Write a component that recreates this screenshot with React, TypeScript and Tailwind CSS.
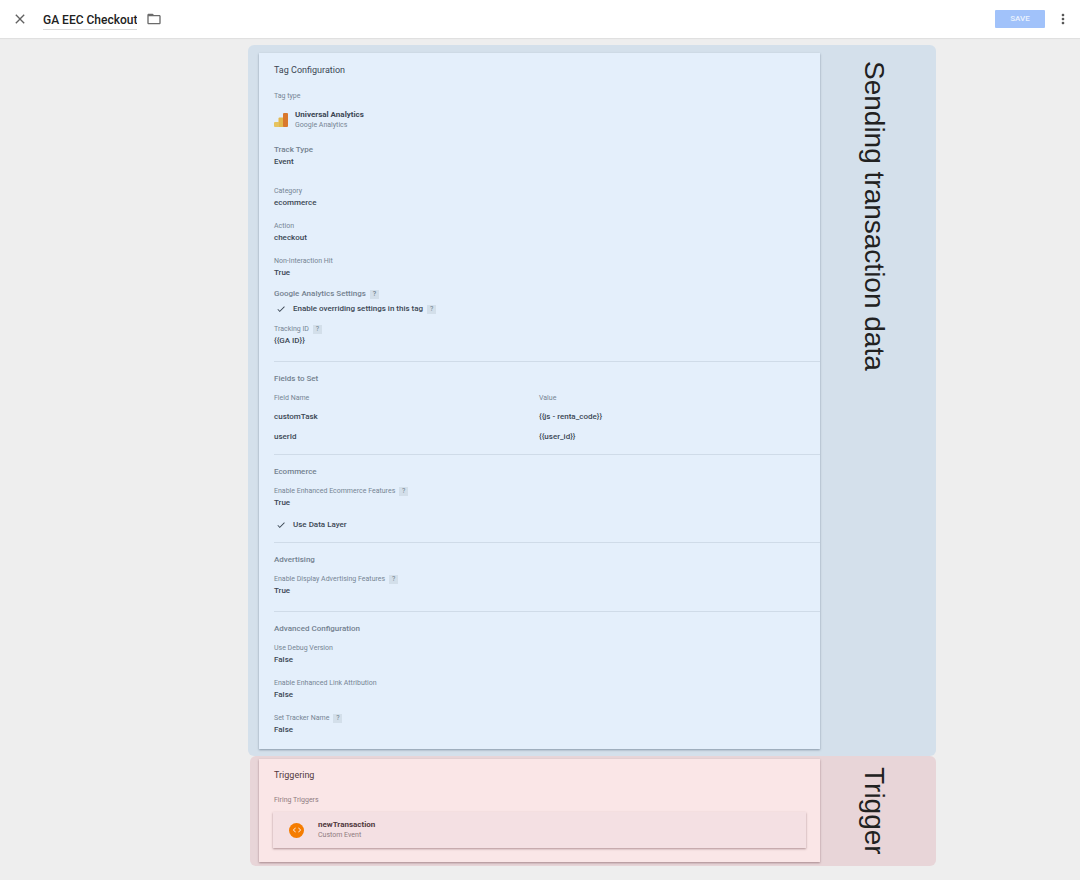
import React from 'react';
import { MdCheck, MdClose, MdCode, MdFolderOpen, MdMoreVert } from 'react-icons/md';

interface FieldProps {
  label: string;
  value: string;
  help?: boolean;
  strong?: boolean;
}

const HelpButton: React.FC<{ topic: string }> = ({ topic }) => (
  <button
    type="button"
    aria-label={`Help: ${topic}`}
    className="flex size-[9px] items-center justify-center bg-[#d3dfea] text-[7px] leading-none text-[#6f7f8e]"
  >
    ?
  </button>
);

const Field: React.FC<FieldProps> = ({ label, value, help, strong }) => (
  <dl>
    <dt
      className={
        strong
          ? 'flex items-center gap-1 text-[8px] leading-3 font-medium text-[#73818f]'
          : 'flex items-center gap-1 text-[7px] leading-3 text-[#768594]'
      }
    >
      {label}
      {help && <HelpButton topic={label} />}
    </dt>
    <dd className="text-[8px] leading-3 font-medium text-[#3b4754]">{value}</dd>
  </dl>
);

const CheckField: React.FC<{ id: string; label: string; help?: boolean }> = ({ id, label, help }) => (
  <div className="flex h-3 items-center gap-1">
    <label htmlFor={id} className="flex items-center text-[8px] leading-3 font-medium text-[#3b4754]">
      <span className="relative mr-[5px] flex size-[14px] items-center justify-center">
        <input id={id} type="checkbox" defaultChecked className="peer absolute inset-0 appearance-none" />
        <MdCheck className="invisible size-[10px] peer-checked:visible" />
      </span>
      {label}
    </label>
    {help && <HelpButton topic={label} />}
  </div>
);

const Section: React.FC<{ title: string; className?: string; children: React.ReactNode }> = ({
  title,
  className = '',
  children,
}) => (
  <section className={`ml-[15px] border-t border-[#cfdbe8] pt-[11px] ${className}`}>
    <h3 className="mb-[7px] text-[8px] leading-3 font-medium text-[#73818f]">{title}</h3>
    {children}
  </section>
);

const AnalyticsLogo: React.FC = () => (
  <svg viewBox="0 0 14 14" className="size-[14px] shrink-0" aria-hidden="true">
    <path d="M5.500 4.500H10V14H4.500V5.500a1 1 0 0 1 1-1z" fill="#e3b84c" />
    <path d="M1 9h4v5H1a1 1 0 0 1-1-1v-3a1 1 0 0 1 1-1z" fill="#e6c35f" />
    <rect x="9" y="0" width="5" height="14" rx="1" fill="#d9782d" />
  </svg>
);

const TopBar: React.FC = () => (
  <header className="flex h-[38px] items-center bg-white pr-[9px] pl-3 shadow-[0_1px_1px_rgba(0,0,0,0.06)]">
    <button type="button" aria-label="Close" className="text-[#616161]">
      <MdClose className="size-4" />
    </button>
    <input
      aria-label="Tag name"
      defaultValue="GA EEC Checkout"
      className="mt-[2px] ml-[15px] field-sizing-content h-5 border-b border-[#dadada] text-[12px] font-medium text-[#212121] outline-none"
    />
    <button type="button" aria-label="Choose folder" className="ml-[9px] text-[#6b6b6b]">
      <MdFolderOpen className="size-4" />
    </button>
    <button
      type="button"
      disabled
      className="ml-auto h-[18px] w-[50px] rounded-[1px] bg-[#a1c2fa] text-[8px] font-medium text-[#eaf2fe]"
    >
      SAVE
    </button>
    <button type="button" aria-label="More actions" className="ml-[10px] text-[#555555]">
      <MdMoreVert className="size-4" />
    </button>
  </header>
);

const customFields = [
  { name: 'customTask', value: '{{js - renta_code}}' },
  { name: 'userId', value: '{{user_id}}' },
];

const TagConfiguration: React.FC = () => (
  <article className="min-w-0 flex-1 bg-[#e4effb] pt-[10px] pb-[13px] shadow-[0_1px_2px_rgba(60,80,100,0.5)]">
    <div className="px-[15px]">
      <h2 className="text-[9px] leading-[14px] text-[#3b4754]">Tag Configuration</h2>
      <p className="mt-[13px] text-[7px] leading-3 text-[#768594]">Tag type</p>
      <div className="mt-2 mb-[14px] flex items-center gap-[7px]">
        <AnalyticsLogo />
        <div>
          <p className="text-[8px] leading-[10px] font-bold text-[#3b4754]">Universal Analytics</p>
          <p className="text-[7px] leading-[10px] text-[#768594]">Google Analytics</p>
        </div>
      </div>
      <Field label="Track Type" value="Event" strong />
      <div className="mt-[17px] flex flex-col gap-[11px]">
        <Field label="Category" value="ecommerce" />
        <Field label="Action" value="checkout" />
        <Field label="Non-Interaction Hit" value="True" />
      </div>
      <h3 className="mt-[9px] mb-[3px] flex items-center gap-1 text-[8px] leading-3 font-medium text-[#73818f]">
        Google Analytics Settings
        <HelpButton topic="Google Analytics Settings" />
      </h3>
      <CheckField id="override-settings" label="Enable overriding settings in this tag" help />
      <div className="mt-2 mb-[14px]">
        <Field label="Tracking ID" value="{{GA ID}}" help />
      </div>
    </div>

    <Section title="Fields to Set" className="pb-[7px]">
      <table className="w-full table-fixed text-left">
        <thead>
          <tr className="h-[15px] align-top text-[7px] leading-3 text-[#768594]">
            <th className="w-[265px] p-0 font-normal">Field Name</th>
            <th className="p-0 font-normal">Value</th>
          </tr>
        </thead>
        <tbody>
          {customFields.map((field) => (
            <tr key={field.name} className="h-5 text-[8px] leading-3 font-medium text-[#3b4754]">
              <td className="p-0">{field.name}</td>
              <td className="p-0">{field.value}</td>
            </tr>
          ))}
        </tbody>
      </table>
    </Section>

    <Section title="Ecommerce" className="pb-[11px]">
      <Field label="Enable Enhanced Ecommerce Features" value="True" help />
      <div className="mt-[10px]">
        <CheckField id="use-data-layer" label="Use Data Layer" />
      </div>
    </Section>

    <Section title="Advertising" className="pb-[14px]">
      <Field label="Enable Display Advertising Features" value="True" help />
    </Section>

    <Section title="Advanced Configuration">
      <div className="flex flex-col gap-[11px]">
        <Field label="Use Debug Version" value="False" />
        <Field label="Enable Enhanced Link Attribution" value="False" />
        <Field label="Set Tracker Name" value="False" help />
      </div>
    </Section>
  </article>
);

const Triggering: React.FC = () => (
  <article className="min-w-0 flex-1 bg-[#fae6e7] px-[14px] pt-[9px] pb-[14px] shadow-[0_1px_2px_rgba(100,60,65,0.5)]">
    <h2 className="pl-px text-[9px] leading-[14px] text-[#51393e]">Triggering</h2>
    <p className="mt-3 mb-[6px] pl-px text-[7px] leading-3 text-[#8f7b80]">Firing Triggers</p>
    <a
      href="#newTransaction"
      className="flex items-center gap-[14px] bg-[#f4e0e3] px-4 py-2 shadow-[0_1px_2px_rgba(100,60,65,0.5)]"
    >
      <span className="flex size-[15px] items-center justify-center rounded-full bg-[#f57c00] text-[#fbe3cd]">
        <MdCode className="size-[10px]" />
      </span>
      <span className="flex flex-col">
        <span className="text-[8px] leading-[10px] font-bold text-[#51393e]">newTransaction</span>
        <span className="text-[7px] leading-[10px] text-[#8f7b80]">Custom Event</span>
      </span>
    </a>
  </article>
);

const SideTitle: React.FC<{ children: React.ReactNode }> = ({ children }) => (
  <div className="flex w-[116px] shrink-0 justify-center pt-2 pr-2">
    <p className="font-['Liberation_Sans',Arial,sans-serif] text-[28px] leading-9 text-[#212121] [writing-mode:vertical-rl]">
      {children}
    </p>
  </div>
);

const App: React.FC = () => (
  <div className="min-h-screen bg-[#eeeeee] font-['Roboto',sans-serif]">
    <TopBar />
    <main className="flex justify-center pt-[7px] pb-[14px] pl-[104px]">
      <div className="w-full max-w-[688px]">
        <div className="flex rounded-md bg-[#d4e0eb] pt-2 pb-[7px] pl-[11px]">
          <TagConfiguration />
          <SideTitle>Sending transaction data</SideTitle>
        </div>
        <div className="ml-[2px] flex rounded-md bg-[#e8d5d8] pt-[3px] pb-1 pl-[9px]">
          <Triggering />
          <SideTitle>Trigger</SideTitle>
        </div>
      </div>
    </main>
  </div>
);

export default App;
